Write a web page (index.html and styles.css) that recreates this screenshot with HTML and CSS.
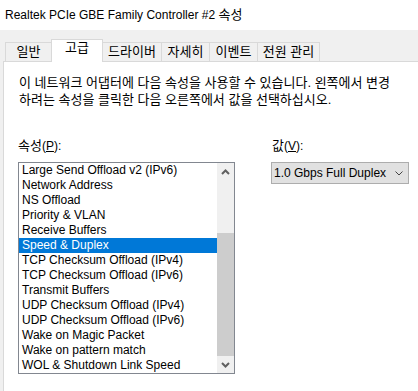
FILE: index.html
```html
<!DOCTYPE html>
<html lang="ko">
<head>
  <meta charset="UTF-8" />
  <title>Realtek PCIe GBE Family Controller #2 속성</title>
  <meta name="viewport" content="width=device-width, initial-scale=1.0" />
  <link rel="stylesheet" href="styles.css">
</head>
<body>
  <div class="titlebar">Realtek PCIe GBE Family Controller #2 <span class="ko">속성</span></div>

  <div class="tabs">
    <div class="tab tab-general">일반</div>
    <div class="tab tab-adv active">고급</div>
    <div class="tab tab-driver">드라이버</div>
    <div class="tab tab-detail">자세히</div>
    <div class="tab tab-event">이벤트</div>
    <div class="tab tab-power">전원 관리</div>
  </div>

  <div class="panel">
    <p class="desc">이 네트워크 어댑터에 다음 속성을 사용할 수 있습니다. 왼쪽에서 변경<br>하려는 속성을 클릭한 다음 오른쪽에서 값을 선택하십시오.</p>

    <div class="props">
      <div class="col-left">
        <div class="label"><span class="ko">속성</span>(<u>P</u>):</div>
        <div class="listbox">
          <ul class="items">
            <li>Large Send Offload v2 (IPv6)</li>
            <li>Network Address</li>
            <li>NS Offload</li>
            <li>Priority &amp; VLAN</li>
            <li>Receive Buffers</li>
            <li class="selected">Speed &amp; Duplex</li>
            <li>TCP Checksum Offload (IPv4)</li>
            <li>TCP Checksum Offload (IPv6)</li>
            <li>Transmit Buffers</li>
            <li>UDP Checksum Offload (IPv4)</li>
            <li>UDP Checksum Offload (IPv6)</li>
            <li>Wake on Magic Packet</li>
            <li>Wake on pattern match</li>
            <li>WOL &amp; Shutdown Link Speed</li>
          </ul>
          <div class="scrollbar">
            <div class="arrow">
              <svg width="9" height="6" viewBox="0 0 9 6"><polyline points="1,5 4.5,1.5 8,5" fill="none" stroke="#606060" stroke-width="2" /></svg>
            </div>
            <div class="track"><div class="thumb"></div></div>
            <div class="arrow">
              <svg width="9" height="6" viewBox="0 0 9 6"><polyline points="1,1 4.5,4.5 8,1" fill="none" stroke="#606060" stroke-width="2" /></svg>
            </div>
          </div>
        </div>
      </div>

      <div class="col-right">
        <div class="label"><span class="ko">값</span>(<u>V</u>):</div>
        <div class="combo">
          <span>1.0 Gbps Full Duplex</span>
          <svg width="8" height="5" viewBox="0 0 8 5"><polyline points="0.5,0.5 4,4 7.5,0.5" fill="none" stroke="#444" stroke-width="1" /></svg>
        </div>
      </div>
    </div>
  </div>
</body>
</html>
```

FILE: styles.css
```css
* {
  margin: 0;
  padding: 0;
  box-sizing: border-box;
}

body {
  background-color: #f0f0f0;
  color: #000;
  font-family: "Liberation Sans", "Noto Sans CJK KR", sans-serif;
  font-size: 12px;
  width: 418px;
  height: 391px;
  overflow: hidden;
}

/* korean glyphs run narrow at 12px, bump them a bit */
.ko {
  font-size: 13px;
}

.titlebar {
  background-color: #fff;
  height: 30px;
  line-height: 30px;
  padding-left: 5px;
  white-space: nowrap;
}

/* tab strip */
.tabs {
  display: flex;
  align-items: flex-end;
  height: 22px;
  margin-top: 9px;
  padding-left: 5px;
}

.tab {
  height: 19px;
  line-height: 18px;
  font-size: 13px;
  text-align: center;
  border: 1px solid #d9d9d9;
  border-bottom: none;
  background-color: #f0f0f0;
  margin-left: -1px;
  white-space: nowrap;
}

.tab:first-child {
  margin-left: 0;
}

.tab.active {
  height: 23px;
  line-height: 16px;
  background-color: #fff;
  margin-bottom: -1px;
  position: relative;
  z-index: 1;
}

.tab-general { width: 47px; }
.tab-adv { width: 52px; }
.tab-driver { width: 60px; }
.tab-detail { width: 49px; }
.tab-event { width: 49px; }
.tab-power { width: 63px; }

/* page panel */
.panel {
  margin-left: 3px;
  width: 430px;
  height: 340px;
  background-color: #fff;
  border-left: 1px solid #d9d9d9;
  border-top: 1px solid #d9d9d9;
  padding: 12px 0 0 14px;
}

.desc {
  font-size: 13px;
  line-height: 17px;
  padding-left: 1px;
  white-space: nowrap;
}

.props {
  display: flex;
  gap: 36px;
  margin-top: 30px;
}

.label {
  height: 16px;
  line-height: 16px;
  margin-bottom: 8px;
}

.label u {
  text-underline-offset: 1px;
}

/* property list */
.listbox {
  width: 217px;
  height: 212px;
  border: 1px solid #828790;
  display: flex;
}

.items {
  list-style: none;
  flex: 1;
}

.items li {
  height: 15px;
  line-height: 15px;
  padding-left: 3px;
  white-space: nowrap;
}

.items li.selected {
  background-color: #0078d7;
  color: #fff;
}

.scrollbar {
  width: 17px;
  background-color: #f0f0f0;
  display: flex;
  flex-direction: column;
}

.arrow {
  height: 17px;
  display: flex;
  align-items: center;
  justify-content: center;
}

.track {
  flex: 1;
  display: flex;
  flex-direction: column;
  justify-content: flex-end;
}

.thumb {
  height: 123px;
  background-color: #cdcdcd;
}

/* value combobox */
.col-right .label {
  padding-left: 1px;
}

.combo {
  width: 138px;
  height: 22px;
  border: 1px solid #adadad;
  background-color: #e1e1e1;
  display: flex;
  align-items: center;
  justify-content: space-between;
  padding: 0 5px 0 2px;
  white-space: nowrap;
}
```
